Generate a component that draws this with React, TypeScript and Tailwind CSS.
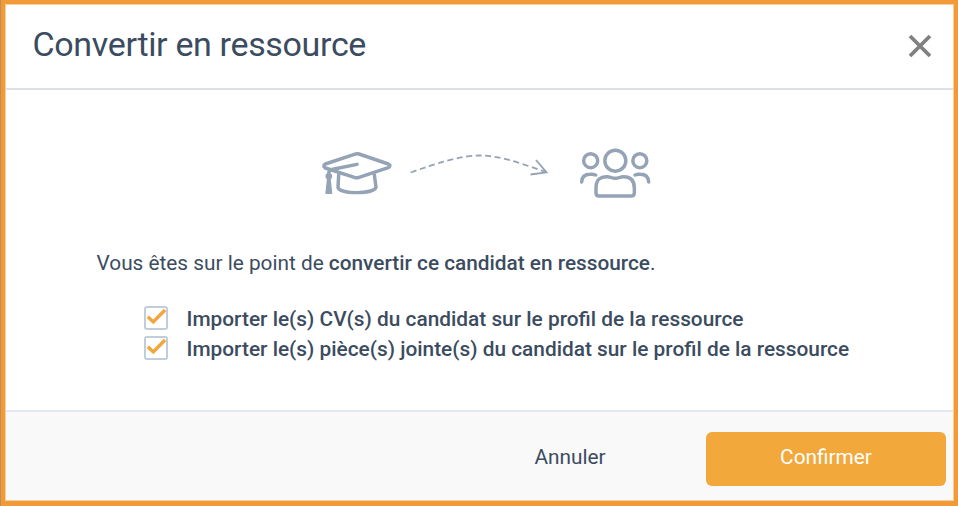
import { useState } from "react";

function GraduationCapIcon() {
  return (
    <svg width="100" height="75" viewBox="0 0 300 225" fill="none" stroke="#94a3b5" strokeWidth="10.400" strokeLinecap="round" strokeLinejoin="round" aria-hidden="true">
      <path d="M133 58 Q140 55 147 57 L235 87 Q245 92 235 98 L147 127 Q140 130 133 127 L46 99 Q37 93 46 87 Z" />
      <path d="M141 88 L72 102 Q56 105 56 116" />
      <path d="M86 120 L84 158 C92 178 190 178 198 157 L193 119" />
      <g fill="#94a3b5" stroke="none">
        <circle cx="56.500" cy="124" r="10" />
        <path d="M51 130 H62 L67 175 Q67 177 64 177 H48 Q46 177 46 175 Z" />
      </g>
    </svg>
  );
}

function DashedArrow() {
  return (
    <svg width="160" height="50" viewBox="0 0 160 50" fill="none" stroke="#94a3b5" strokeWidth="1.8" aria-hidden="true">
      <path d="M10.700 32.500 C37 23 61 15.500 80 15.500 C101 15.500 125 25 146 32" strokeDasharray="6 3.600" />
      <path d="M136 20 L146.500 32.300 L130.500 34.500" />
    </svg>
  );
}

function TeamIcon() {
  return (
    <svg width="100" height="75" viewBox="0 0 300 225" fill="none" stroke="#94a3b5" strokeWidth="10.400" strokeLinecap="round" strokeLinejoin="round" aria-hidden="true">
      <circle cx="136" cy="77" r="31.500" />
      <circle cx="62" cy="77" r="21" />
      <circle cx="209.500" cy="77" r="21" />
      <path d="M35 141 C36 124 46 118 60 118 Q69 117 77 120" />
      <path d="M236 141 C235 124 225 118 211 118 Q202 117 195 120" />
      <path d="M78 160 C78 132 91 125 111 125 C123 125 124 130 136 130 C148 130 149 125 161 125 C181 125 193 135 193 160 V174 Q193 183 184 183 H87 Q78 183 78 174 Z" />
    </svg>
  );
}

function CheckRow({ label }: { label: string }) {
  const [checked, setChecked] = useState(true);
  return (
    <label className="flex h-[30px] cursor-pointer items-center">
      <input type="checkbox" className="sr-only" checked={checked} onChange={() => setChecked(!checked)} />
      <span className="mr-[18.500px] flex size-6 shrink-0 rounded-[3px] border-2 border-[#c2cddb] bg-white">
        {checked && (
          <svg width="20" height="20" viewBox="0 0 20 20" fill="none" stroke="#f2a63b" strokeWidth="3.400" aria-hidden="true">
            <path d="M1.800 8.800 L7.300 13.900 L19 2" />
          </svg>
        )}
      </span>
      <span className="pt-[2px] text-[20.85px] leading-7 font-medium whitespace-nowrap">{label}</span>
    </label>
  );
}

export default function App() {
  return (
    <div className="flex h-[506px] w-[958px] border-l border-[#ba9058] bg-[#f29938] font-['Roboto',sans-serif] text-[#3b4c60]">
      <div className="mt-1 mr-1 mb-[5px] ml-1 flex flex-1 flex-col border border-[#f9cf9e] bg-white">
        <header className="flex h-[85px] shrink-0 items-center justify-between border-b-2 border-[#dde1e6] pr-5 pl-[26.500px]">
          <h1 className="pb-[5px] text-[34px] leading-10 tracking-[-0.34px]">Convertir en ressource</h1>
          <button type="button" aria-label="Fermer" className="pb-[2px]">
            <svg width="26" height="26" viewBox="0 0 26 26" fill="none" stroke="#808080" strokeWidth="3.800" aria-hidden="true">
              <path d="M3 3 L23 23 M23 3 L3 23" />
            </svg>
          </button>
        </header>
        <main className="flex flex-1 flex-col">
          <div className="mt-[45px] flex h-[75px] items-start pl-[304px]">
            <GraduationCapIcon />
            <div className="mt-[5px] -ml-[10px]">
              <DashedArrow />
            </div>
            <div className="ml-[10px]">
              <TeamIcon />
            </div>
          </div>
          <p className="mt-[38px] pl-[90.500px] text-[20.8px] leading-[30px]">
            Vous êtes sur le point de <strong className="font-medium">convertir ce candidat en ressource</strong>.
          </p>
          <div className="mt-[25px] pl-[138px]">
            <CheckRow label="Importer le(s) CV(s) du candidat sur le profil de la ressource" />
            <CheckRow label="Importer le(s) pièce(s) jointe(s) du candidat sur le profil de la ressource" />
          </div>
        </main>
        <footer className="flex h-[90px] shrink-0 items-start justify-end border-t-2 border-[#e2e9f3] bg-[#f9f9f9] pt-5 pr-[7px] text-[20.8px]">
          <button type="button" className="mr-[16px] h-[52px] w-[240px]">Annuler</button>
          <button type="button" className="h-[54px] w-[240px] rounded-md bg-[#f2a83b] pb-[2px] text-white">Confirmer</button>
        </footer>
      </div>
    </div>
  );
}
